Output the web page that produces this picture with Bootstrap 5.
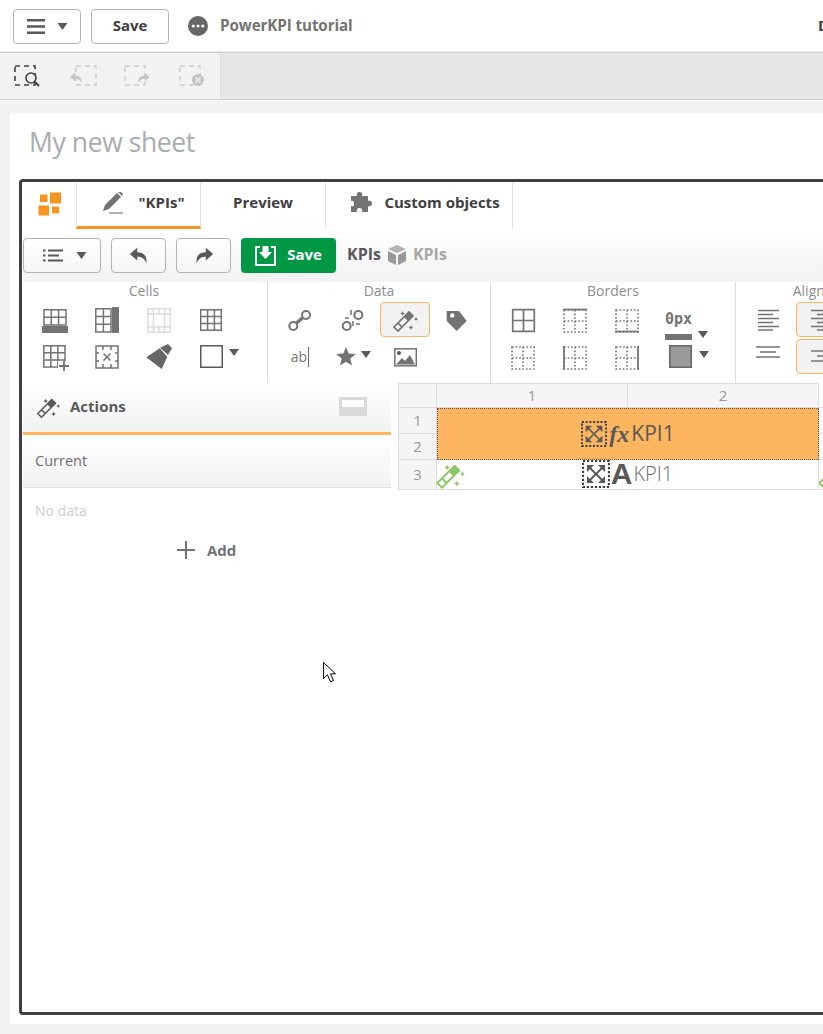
<!DOCTYPE html>
<html lang="en"><head><meta charset="utf-8"><title>PowerKPI tutorial</title>
<link href="https://cdn.jsdelivr.net/npm/bootstrap@5.3.0/dist/css/bootstrap.min.css" rel="stylesheet">
<style>
html,body{overflow:hidden;height:1034px;background:#f2f2f2;}
body{font-family:"Open Sans","Liberation Sans",sans-serif;color:#595959;}
.page-w{width:1000px;}
.qbar{height:52px;background:#fff;padding-left:13px;}
.qbtn{display:flex;align-items:center;justify-content:center;height:35px;background:#fff;border:1px solid #b3b3b3;border-radius:4px;font-weight:700;font-size:15px;color:#404040;padding:0 0 2px;}
.b-menu{width:68px;gap:12px;padding:0;}
.b-save{width:78px;margin-left:10px;}
.dots{margin-left:19px;}
.doc-title{margin-left:12px;font-weight:700;font-size:15.2px;color:#737373;letter-spacing:-.1px;width:598px;padding-bottom:2px;}
.clip-d{font-weight:700;font-size:15px;color:#404040;padding-bottom:2px;}
.qtools{height:48px;border-top:1px solid #cbcbcb;border-bottom:1px solid #d0d0d0;background:#e6e6e6;box-shadow:0 -1px 0 #efefef;}
.qtools-l{width:221px;height:46px;background:#f2f2f2;border-right:1px solid #dcdcdc;padding-left:13px;gap:25px;}
.sep-w{height:1px;background:#fff;}
.sheet{margin:12px 0 0 10px;background:#fff;height:911px;padding:0 0 9px 9px;}
.sheet-title{height:66px;padding:10px 0 0 0;font-size:26.5px;line-height:38px;color:#a9adad;font-weight:400;text-indent:10px;letter-spacing:-.4px;}
.frame{height:836px;border:3px solid #404040;border-radius:4px;background:#fff;overflow:hidden;padding-left:1px;}
.tabs{height:47px;}
.logo-slot{width:53px;}
.qtab{display:flex;align-items:center;justify-content:center;font-weight:700;font-size:15px;color:#404040;border-right:1px solid #e3e3e3;padding-bottom:6px;}
.t1{width:125px;border-left:1px solid #e3e3e3;border-bottom:3px solid #f7941d;gap:14px;padding:0 0 3px 8px;}
.t2{width:125px;}
.t3{width:187px;gap:12px;padding-left:12px;}
.tool2{height:52px;background:linear-gradient(#fff,#f2f2f2);gap:10px;}
.tb{display:flex;align-items:center;justify-content:center;height:35px;background:linear-gradient(#fff,#f5f5f5);border:1px solid #b3b3b3;border-radius:4px;}
.tb-list{width:78px;gap:13px;padding-left:6px;}
.tb-ar{width:55px;}
.tb-green{width:95px;height:35px;background:#009845;border:0;border-radius:4px;color:#fff;font-weight:700;font-size:15px;gap:11px;display:flex;align-items:center;justify-content:center;}
.tb-green span,.crumb,.crumb-g{padding-bottom:2px;}
.crumbs{gap:6px;}
.crumb{font-weight:700;font-size:16px;color:#595959;margin-left:1px;}
.crumb-g{font-weight:700;font-size:16px;color:#a6a6a6;}
.ribbon{height:102px;border-top:1px solid #f3f3f3;}
.rgroup{border-right:1px solid #dcdcdc;padding-left:6px;flex:none;}
.g1{width:245px;}.g2{width:223px;}.g3{width:245px;}.g4{width:180px;border-right:0;white-space:nowrap;}
.rhead{font-size:14px;line-height:18px;color:#8c8c8c;text-align:center;padding-right:6px;height:21px;}
.g1 .rhead{padding-right:8px;}
.rgrid{display:grid;grid-template-columns:repeat(4,52px);grid-auto-rows:37px;margin-top:-2px;}
.ricon{display:flex;align-items:center;justify-content:center;position:relative;}
.ricon svg{display:block;flex:none;}
.on{background:#f2f2f2;border:1px solid #fdb45c;border-radius:4px;margin:1px 0 1px 2px;height:35px;align-self:center;}
.ab-ico{font-size:14px;color:#737373;border-right:1.5px solid #666;line-height:20px;padding-right:1px;}
.ic-start{justify-content:flex-start;}
.sw1{padding-left:15px;gap:6px;}
.sw2{padding-left:16px;gap:7px;}
.star-c{padding-left:10px;gap:5px;}
.px-c{flex-direction:column;align-items:flex-start;justify-content:flex-start;padding:10px 0 0 12px;}
.px-row{gap:6px;margin-top:7px;}
.px-lab{font-family:"DejaVu Sans Mono","Liberation Mono",monospace;font-weight:700;font-size:15px;color:#737373;line-height:16px;}
.px-bar{width:27px;height:6px;background:#737373;flex:none;}
.workarea{height:628px;}
.panel{width:368px;flex:none;}
.p-head{height:52px;background:linear-gradient(#fff,#f2f2f2);border-bottom:3px solid #fdb45c;padding:0 24px 2px 12px;gap:9px;font-weight:700;font-size:15px;color:#595959;}
.p-cur{height:53px;background:linear-gradient(#fff,#f2f2f2);border-bottom:1px solid #ddd;padding-left:12px;font-size:14.5px;color:#6e6e6e;}
.p-none{padding:13px 0 0 12px;font-size:14px;line-height:20px;color:#ccc;}
.p-add{margin-top:19px;height:20px;margin-left:154px;gap:12px;font-weight:700;font-size:15px;color:#737373;}
.gridw{margin-left:7px;display:grid;grid-template-columns:39px 191px 191px 30px;grid-template-rows:25px 26px 26px 30px;align-self:flex-start;font-size:15px;color:#999;text-align:center;}
.gh{background:#f5f5f5;border-top:1px solid #ddd;border-right:1px solid #ddd;border-bottom:1px solid #ddd;display:flex;align-items:center;justify-content:center;line-height:1;}
.gr{background:#f5f5f5;border-left:1px solid #ddd;border-right:1px solid #ddd;border-bottom:1px solid #ddd;display:flex;align-items:center;justify-content:center;line-height:1;}
.gc0{border-left:1px solid #ddd;}
.gmerge{grid-column:2/4;grid-row:2/4;background:#fdb55f;border:1px dotted #555;display:flex;align-items:center;justify-content:center;gap:2px;color:#595959;font-size:21px;}
.gblank{border-bottom:1px solid #ddd;}
.gcell{grid-column:2/4;border-bottom:1px solid #ddd;border-right:1px solid #ddd;display:flex;align-items:center;justify-content:center;gap:1px;position:relative;font-size:20px;color:#6b6b6b;font-weight:300;padding-bottom:2px;}
.gwand{position:absolute;left:-3px;top:-1px;}
.gwand2{overflow:hidden;display:flex;align-items:flex-start;}
.gwand2 svg{flex:none;margin:-1px 0 0 -3px;}
.fx{font-family:"Liberation Serif",serif;font-style:italic;font-weight:700;font-size:24px;line-height:1;color:#595959;}
.big-a{font-family:"Liberation Sans",sans-serif;font-weight:700;font-size:30px;line-height:1;color:#595959;}
.cursor-ico{position:absolute;left:323px;top:662px;}
</style></head>
<body>
<svg width="0" height="0" class="d-none"><defs>
<symbol id="caret" viewBox="0 0 10 7"><path d="M0 0H10L5 7Z" fill="#595959"/></symbol>
<symbol id="grid3" viewBox="0 0 22 22"><path d="M.7.7H21.3V21.3H.7ZM7.6.7V21.3M14.4.7V21.3M.7 7.6H21.3M.7 14.4H21.3" fill="none" stroke="#737373" stroke-width="1.5"/></symbol>
<symbol id="dots" viewBox="0 0 24 24"><path d="M1 1H23V23H1ZM12 1V23M1 12H23" fill="none" stroke="#737373" stroke-width="1.6" stroke-dasharray="1.6 2"/></symbol>
<symbol id="wand" viewBox="0 0 28 28"><path d="M3 21 18 6 22 10 7 25ZM7 17 11 21" fill="none" stroke="currentColor" stroke-width="1.700"/><path d="M18 6 22 10 17 15 13 11Z" fill="currentColor"/><path d="M11.500 5l.8 1.700 1.700.8-1.700.8-.8 1.700-.8-1.700-1.700-.8 1.700-.8ZM25 11l.7 1.300 1.300.7-1.300.7-.7 1.300-.7-1.300-1.300-.7 1.300-.7ZM20 19l.8 1.700 1.700.8-1.700.8-.8 1.700-.8-1.700-1.700-.8 1.700-.8Z" fill="currentColor"/></symbol>
<symbol id="arrows" viewBox="0 0 28 28"><rect x="1" y="1" width="26" height="26" fill="none" stroke="#404040" stroke-width="2.200" stroke-dasharray="2.200 1.800"/><path d="M7 7 21 21M21 7 7 21" stroke="#595959" stroke-width="1.800"/><path d="M5 5h7L5 12ZM23 5h-7L23 12ZM5 23h7L5 16ZM23 23h-7L23 16Z" fill="#595959"/></symbol>
<symbol id="undo" viewBox="0 0 24 24"><path d="M10 4 2 11 10 18V14C15 14 18 16 20 21 21 14 18 9 10 9Z" fill="currentColor"/></symbol>
<symbol id="redo" viewBox="0 0 24 24"><path d="M14 4 22 11 14 18V14C9 14 6 16 4 21 3 14 6 9 14 9Z" fill="currentColor"/></symbol>
</defs></svg>

<div class="page-w">
<div class="qbar d-flex align-items-center">
  <button class="qbtn b-menu" type="button" aria-label="Menu"><svg width="18" height="15" viewBox="0 0 18 15"><path d="M0 1.200H18M0 7.500H18M0 13.800H18" stroke="#595959" stroke-width="2.400"/></svg><svg width="11" height="7"><use href="#caret"/></svg></button>
  <button class="qbtn b-save" type="button">Save</button>
  <svg class="dots" width="20" height="20" viewBox="0 0 21 21"><circle cx="10.500" cy="10.500" r="10.500" fill="#666"/><circle cx="5.500" cy="10.500" r="1.700" fill="#fff"/><circle cx="10.500" cy="10.500" r="1.700" fill="#fff"/><circle cx="15.500" cy="10.500" r="1.700" fill="#fff"/></svg>
  <span class="doc-title">PowerKPI tutorial</span>
  <span class="clip-d">D</span>
</div>
<div class="qtools d-flex">
  <div class="qtools-l d-flex align-items-center">
    <svg width="30" height="24" viewBox="0 0 30 24"><path d="M2 2H22V21H2Z" fill="none" stroke="#404040" stroke-width="1.600" stroke-dasharray="5 4"/><circle cx="18" cy="14" r="5" fill="#f2f2f2" stroke="#404040" stroke-width="1.600"/><path d="M21.500 17.500 26 22" stroke="#404040" stroke-width="2"/></svg>
    <svg width="30" height="24" viewBox="0 0 30 24" style="color:#c4c4c4"><path d="M8 2H28V21H8Z" fill="none" stroke="#ccc" stroke-width="1.400" stroke-dasharray="5 4"/><use href="#undo" x="1" y="6" width="15" height="15"/></svg>
    <svg width="30" height="24" viewBox="0 0 30 24" style="color:#c4c4c4"><path d="M2 2H22V21H2Z" fill="none" stroke="#ccc" stroke-width="1.400" stroke-dasharray="5 4"/><use href="#redo" x="13" y="6" width="15" height="15"/></svg>
    <svg width="30" height="24" viewBox="0 0 30 24"><path d="M2 2H22V21H2Z" fill="none" stroke="#ccc" stroke-width="1.400" stroke-dasharray="5 4"/><circle cx="20" cy="16" r="6" fill="#c4c4c4"/><path d="M17.500 13.500 22.500 18.500M22.500 13.500 17.500 18.500" stroke="#f2f2f2" stroke-width="1.600"/></svg>
  </div>
</div>
<div class="sep-w"></div>

<div class="sheet">
  <div class="sheet-title">My new sheet</div>
  <div class="frame">
    <div class="tabs d-flex">
      <div class="logo-slot d-flex align-items-center justify-content-center pb-1"><svg width="24" height="24" viewBox="0 0 24 24"><path d="M2 2.500H9.500V10H2ZM12 .5H23V11.500H12ZM.5 13.500H11V23.500H.5ZM14 14.500H21V21.500H14Z" fill="#f7941d"/></svg></div>
      <div class="qtab t1"><svg width="24" height="24" viewBox="0 0 24 24"><path d="M2 20 4 14 16 2 20 6 8 18Z" fill="#737373"/><path d="M17 1 21 5 22 3 20 1Z" fill="#737373"/><path d="M8 22H22" stroke="#999" stroke-width="1.500"/></svg><span>"KPIs"</span></div>
      <div class="qtab t2">Preview</div>
      <div class="qtab t3"><svg width="22" height="21" viewBox="0 0 22 21"><path d="M1 4H7C6 1 8 0 9.500 0S13 1 12 4H18V9C21 8 22 10 22 11.500S21 15 18 14V20H12C13 17 11 16 9.500 16S6 17 7 20H1V14C4 15 4 13 4 12S4 8 1 9Z" fill="#737373"/></svg><span>Custom objects</span></div>
    </div>
    <div class="tool2 d-flex align-items-center">
      <div class="tb tb-list"><svg width="20" height="13" viewBox="0 0 20 13"><path d="M0 1.500H2.500M5 1.500H20M0 6.500H2.500M5 6.500H16M0 11.500H2.500M5 11.500H20" stroke="#595959" stroke-width="2"/></svg><svg width="11" height="7"><use href="#caret"/></svg></div>
      <div class="tb tb-ar" style="color:#595959"><svg width="22" height="22"><use href="#undo"/></svg></div>
      <div class="tb tb-ar" style="color:#595959"><svg width="22" height="22"><use href="#redo"/></svg></div>
      <div class="tb-green"><svg width="21" height="21" viewBox="0 0 21 21"><path d="M5 2H1V20H20V2H16" fill="none" stroke="#fff" stroke-width="2"/><path d="M7.500 1H13.500V7H17L10.500 14 4 7H7.500Z" fill="#fff"/></svg><span>Save</span></div>
      <div class="d-flex align-items-center crumbs">
        <span class="crumb">KPIs</span>
        <svg width="20" height="20" viewBox="0 0 20 20"><path d="M10 0 19 4 10 8 1 4Z" fill="#b3b3b3"/><path d="M1 6 9 10V20L1 16ZM19 6 11 10V20L19 16Z" fill="#999"/></svg>
        <span class="crumb-g">KPIs</span>
      </div>
    </div>
    <div class="ribbon d-flex">
      <div class="rgroup g1">
        <div class="rhead">Cells</div>
        <div class="rgrid">
          <div class="ricon"><svg width="28" height="28" viewBox="0 0 28 28"><path d="M3 3.700H25V19H3ZM10.300 3.700V19M17.600 3.700V19M3 11.300H25" fill="none" stroke="#737373" stroke-width="1.500"/><rect x="1" y="20" width="26" height="7" fill="#737373"/></svg></div>
          <div class="ricon"><svg width="28" height="28" viewBox="0 0 28 28"><path d="M2.800 2.800H18V26H2.800ZM10.400 2.800V26M2.800 10.500H18M2.800 18.300H18" fill="none" stroke="#737373" stroke-width="1.500"/><rect x="19" y="1" width="7" height="26" fill="#737373"/></svg></div>
          <div class="ricon"><svg width="28" height="28" viewBox="0 0 28 28"><path d="M2.800 2.800H25.200V26.200H2.800ZM2.800 8H25.200M2.800 21H25.200M8.500 2.800V8M14 2.800V8M19.500 2.800V8M8.500 21V26.200M14 21V26.200M19.500 21V26.200M8.500 8V21M19.500 8V21" fill="none" stroke="#ddd" stroke-width="1.500"/></svg></div>
          <div class="ricon"><svg width="28" height="28" viewBox="0 0 28 28"><use href="#grid3" x="3" y="3" width="22" height="22"/></svg></div>
          <div class="ricon"><svg width="28" height="28" viewBox="0 0 28 28"><path d="M2.800 2.800H24V24H2.800ZM9.800 2.800V24M16.900 2.800V24M2.800 9.800H24M2.800 16.900H24" fill="none" stroke="#737373" stroke-width="1.500"/><rect x="17" y="18" width="12" height="10" fill="#fff"/><path d="M18 23H28M23 18V28" stroke="#737373" stroke-width="1.800"/></svg></div>
          <div class="ricon"><svg width="28" height="28" viewBox="0 0 28 28"><path d="M3 3H25V25H3ZM10 3V25M18 3V25M3 10H25M3 18H25" fill="none" stroke="#737373" stroke-width="1.500"/><rect x="6" y="7" width="16" height="14" fill="#fff"/><path d="M10.500 10.500 17.500 17.500M17.500 10.500 10.500 17.500" stroke="#737373" stroke-width="1.600"/></svg></div>
          <div class="ricon"><svg width="28" height="28" viewBox="0 0 28 28"><path d="M1.300 14.300 14.700 5.300 22.300 13.700 16.700 26Z" fill="#666"/><path d="M15 4.700 23 1 27 5.300 23 12Z" fill="#666"/></svg></div>
          <div class="ricon ic-start sw1"><svg width="23" height="23" viewBox="0 0 23 23"><rect x=".75" y=".75" width="21.500" height="21.500" fill="#fff" stroke="#595959" stroke-width="1.500"/></svg><svg width="10" height="7" class="mb-2"><use href="#caret"/></svg></div>
        </div>
      </div>
      <div class="rgroup g2">
        <div class="rhead">Data</div>
        <div class="rgrid">
          <div class="ricon"><svg width="28" height="28" viewBox="0 0 28 28"><circle cx="7.300" cy="20" r="4" fill="none" stroke="#737373" stroke-width="2"/><circle cx="20" cy="9" r="4" fill="none" stroke="#737373" stroke-width="2"/><path d="M10.500 17 16.500 12" stroke="#737373" stroke-width="3.500"/></svg></div>
          <div class="ricon"><svg width="28" height="28" viewBox="0 0 28 28"><circle cx="8.700" cy="20" r="4" fill="none" stroke="#737373" stroke-width="2"/><circle cx="20.300" cy="9" r="4" fill="none" stroke="#737373" stroke-width="2"/><path d="M13 4V9M7 12H11M18 18H22M15 15V20" stroke="#737373" stroke-width="1.500"/></svg></div>
          <div class="ricon on" style="color:#737373"><svg width="28" height="28"><use href="#wand"/></svg></div>
          <div class="ricon"><svg width="28" height="28" viewBox="0 0 28 28"><path d="M4.700 5H17L24.700 15 14.700 25 4.700 15Z" fill="#737373"/><circle cx="10.300" cy="9.500" r="2.200" fill="#fff"/></svg></div>
          <div class="ricon"><span class="ab-ico">ab</span></div>
          <div class="ricon ic-start star-c"><svg width="20" height="19" viewBox="0 0 20 19"><path d="M10 0 12.700 6.500 19.700 7.100 14.300 11.600 16 18.500 10 14.800 4 18.500 5.700 11.600 .3 7.100 7.300 6.500Z" fill="#737373"/></svg><svg width="10" height="7" class="mb-1"><use href="#caret"/></svg></div>
          <div class="ricon"><svg width="28" height="28" viewBox="0 0 28 28"><rect x="4.800" y="5.800" width="21.500" height="17" fill="#fff" stroke="#737373" stroke-width="1.500"/><circle cx="9" cy="10" r="2" fill="#595959"/><path d="M6 21.500 12 15 15 18 20 12 25 21.500Z" fill="#737373"/></svg></div>
        </div>
      </div>
      <div class="rgroup g3">
        <div class="rhead">Borders</div>
        <div class="rgrid">
          <div class="ricon"><svg width="28" height="28" viewBox="0 0 28 28"><path d="M3.700 3.700H25.300V25.300H3.700ZM14.500 3.700V25.300M3.700 14.500H25.300" fill="none" stroke="#737373" stroke-width="1.700"/></svg></div>
          <div class="ricon"><svg width="28" height="28" viewBox="0 0 28 28"><use href="#dots" x="2" y="3" width="24" height="24"/><path d="M2 3.500H26" stroke="#737373" stroke-width="1.700"/></svg></div>
          <div class="ricon"><svg width="28" height="28" viewBox="0 0 28 28"><use href="#dots" x="2" y="3" width="24" height="24"/><path d="M2 25.500H26" stroke="#737373" stroke-width="1.700"/></svg></div>
          <div class="ricon px-c"><span class="px-lab">0px</span><div class="d-flex align-items-start px-row"><span class="px-bar"></span><svg width="10" height="7" style="margin-top:-3px"><use href="#caret"/></svg></div></div>
          <div class="ricon"><svg width="28" height="28" viewBox="0 0 28 28"><use href="#dots" x="2" y="3" width="24" height="24"/></svg></div>
          <div class="ricon"><svg width="28" height="28" viewBox="0 0 28 28"><use href="#dots" x="2" y="3" width="24" height="24"/><path d="M3 3V27" stroke="#737373" stroke-width="1.700"/></svg></div>
          <div class="ricon"><svg width="28" height="28" viewBox="0 0 28 28"><use href="#dots" x="2" y="3" width="24" height="24"/><path d="M25 3V27" stroke="#737373" stroke-width="1.700"/></svg></div>
          <div class="ricon ic-start sw2"><svg width="23" height="23" viewBox="0 0 23 23"><rect x=".75" y=".75" width="21.500" height="21.500" fill="#999" stroke="#666" stroke-width="1.500"/></svg><svg width="10" height="7" class="mb-1"><use href="#caret"/></svg></div>
        </div>
      </div>
      <div class="rgroup g4">
        <div class="rhead">Alignment</div>
        <div class="rgrid">
          <div class="ricon"><svg width="28" height="28" viewBox="0 0 28 28"><path d="M4 4.500H25M4 8.500H19M4 12.500H25M4 16.500H19M4 20.500H25M4 24H19" stroke="#737373" stroke-width="1.400"/></svg></div>
          <div class="ricon on"><svg width="28" height="28" viewBox="0 0 28 28"><path d="M4 4.500H25M10 8.500H25M4 12.500H25M10 16.500H25M4 20.500H25M10 24H25" stroke="#737373" stroke-width="1.400"/></svg></div>
          <div class="ricon"></div><div class="ricon"></div>
          <div class="ricon pb-2"><svg width="28" height="18" viewBox="0 0 28 18"><path d="M2 3H26M6 8H22M2 13H26" stroke="#737373" stroke-width="1.500"/></svg></div>
          <div class="ricon on"><svg width="28" height="18" viewBox="0 0 28 18"><path d="M4 3H25M10 8H25M4 13H25" stroke="#737373" stroke-width="1.500"/></svg></div>
        </div>
      </div>
    </div>
    <div class="workarea d-flex">
      <div class="panel">
        <div class="p-head d-flex align-items-center"><svg width="26" height="26" viewBox="0 0 28 28" style="color:#595959"><use href="#wand"/></svg><span class="flex-grow-1">Actions</span><svg width="28" height="19" viewBox="0 0 28 19"><rect width="28" height="19" rx="1" fill="#d9d9d9"/><rect x="3" y="3" width="22" height="7" fill="#fff"/></svg></div>
        <div class="p-cur d-flex align-items-center">Current</div>
        <div class="p-none">No data</div>
        <div class="p-add d-flex align-items-center"><svg width="18" height="18" viewBox="0 0 18 18"><path d="M9 0V18M0 9H18" stroke="#737373" stroke-width="2"/></svg><span>Add</span></div>
      </div>
      <div class="gridw">
        <div class="gh gc0"></div><div class="gh">1</div><div class="gh">2</div><div class="gblank"></div>
        <div class="gr">1</div><div class="gmerge"><svg width="26" height="26"><use href="#arrows"/></svg><span class="fx">fx</span><span>KPI1</span></div><div class="gblank"></div>
        <div class="gr">2</div><div class="gblank"></div>
        <div class="gr">3</div>
        <div class="gcell"><svg class="gwand" width="32" height="32" viewBox="0 0 28 28" style="color:#8cc665"><use href="#wand"/></svg><svg width="28" height="28"><use href="#arrows"/></svg><span class="big-a">A</span><span>KPI1</span></div>
        <div class="gblank gwand2"><svg width="32" height="32" viewBox="0 0 28 28" style="color:#8cc665"><use href="#wand"/></svg></div>
      </div>
    </div>
  </div>
</div>
</div>
<svg class="cursor-ico" width="13" height="21" viewBox="0 0 13 21"><path d="M.5.500V16.500L4.500 12.800 7.500 19.800 10.500 18.500 7.500 11.800H12.500Z" fill="#fff" stroke="#000" stroke-width="1"/></svg>
</body></html>
